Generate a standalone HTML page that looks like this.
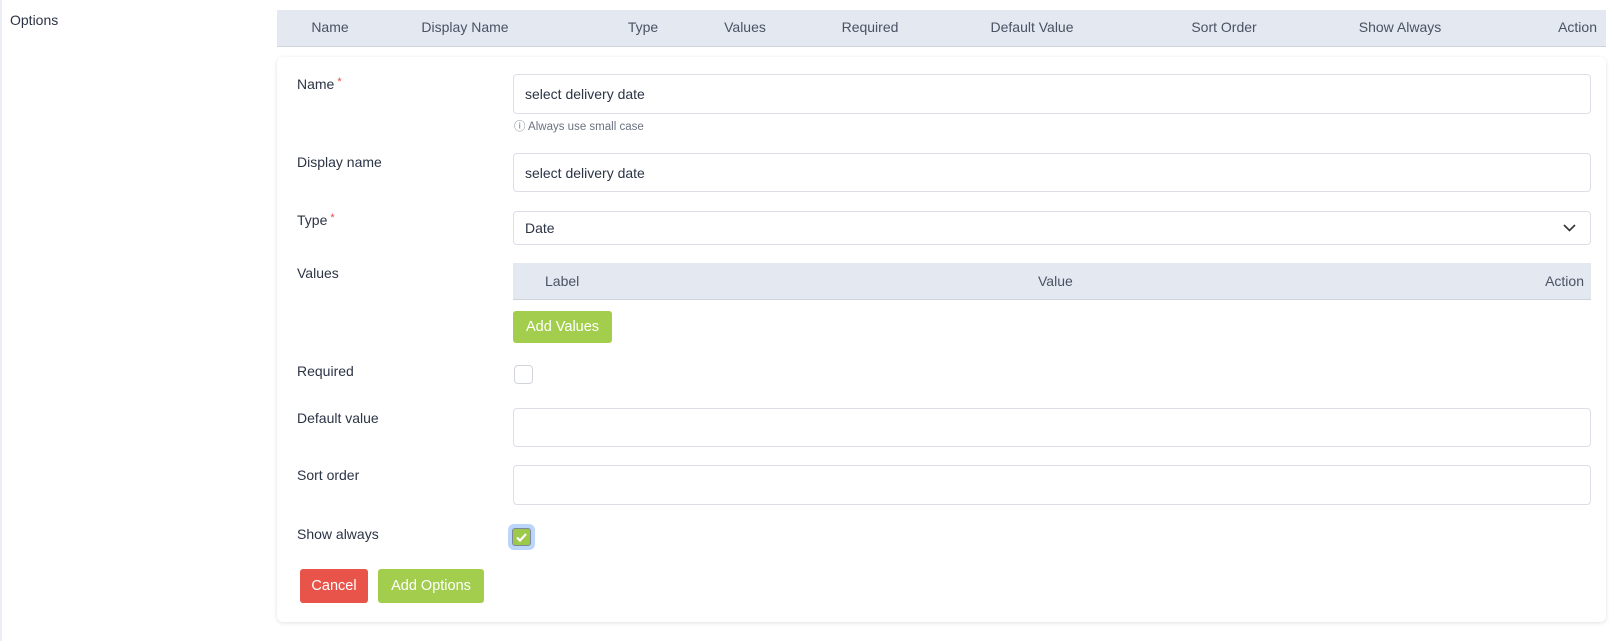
<!DOCTYPE html>
<html><head><meta charset="utf-8"><style>
*{box-sizing:border-box;margin:0;padding:0}
body{width:1614px;height:641px;background:#fff;font-family:"Liberation Sans",sans-serif;font-size:14px;color:#2b3445;position:relative;overflow:hidden}
.a{position:absolute}
.lb{position:absolute;left:297px}
.in{position:absolute;left:513px;width:1078px;border:1px solid #dcdfe5;border-radius:4px;background:#fff;padding-left:11px;display:flex;align-items:center}
.th{position:absolute;top:19px;color:#4a5263;transform:translateX(-50%)}
.req{color:#e5484d;font-size:11px;vertical-align:top;margin-left:3px}
.btn{position:absolute;color:#fff;border-radius:3px;display:flex;align-items:center;justify-content:center;font-size:14.5px}
</style></head><body>
<div class="a" style="left:0;top:0;width:2px;height:641px;background:#eceef6"></div>
<div class="a" style="left:10px;top:12px">Options</div>
<div class="a" style="left:277px;top:10px;width:1329px;height:37px;background:#e4e8f1;border-bottom:1px solid #cfd4de"></div>
<div class="th" style="left:330px">Name</div>
<div class="th" style="left:465px">Display Name</div>
<div class="th" style="left:643px">Type</div>
<div class="th" style="left:745px">Values</div>
<div class="th" style="left:870px">Required</div>
<div class="th" style="left:1032px">Default Value</div>
<div class="th" style="left:1224px">Sort Order</div>
<div class="th" style="left:1400px">Show Always</div>
<div class="a" style="right:17px;top:19px;color:#4a5263">Action</div>

<div class="a" style="left:277px;top:57px;width:1329px;height:565px;border-radius:6px;background:#fff;box-shadow:0 1px 4px rgba(0,0,0,.12)"></div>

<div class="lb" style="top:76px">Name<span class="req">*</span></div>
<div class="in" style="top:74px;height:40px">select delivery date</div>
<div class="a" style="left:514px;top:118px;font-size:11.5px;color:#6b7280">ⓘ Always use small case</div>

<div class="lb" style="top:154px">Display name</div>
<div class="in" style="top:153px;height:39px">select delivery date</div>

<div class="lb" style="top:212px">Type<span class="req">*</span></div>
<div class="in" style="top:211px;height:34px">Date
<svg class="a" style="right:14px;top:12px" width="13" height="8" viewBox="0 0 13 8"><path d="M1 1l5.5 5.5L12 1" fill="none" stroke="#333" stroke-width="1.6"/></svg></div>

<div class="lb" style="top:265px">Values</div>
<div class="a" style="left:513px;top:263px;width:1078px;height:37px;background:#e4e8f1;border-bottom:1px solid #cfd4de"></div>
<div class="a" style="left:545px;top:273px;color:#4a5263">Label</div>
<div class="a" style="left:1038px;top:273px;color:#4a5263">Value</div>
<div class="a" style="right:30px;top:273px;color:#4a5263">Action</div>
<div class="btn" style="left:513px;top:311px;width:99px;height:32px;background:#a2cd4d">Add Values</div>

<div class="lb" style="top:363px">Required</div>
<div class="a" style="left:514px;top:365px;width:19px;height:19px;border:1px solid #d0d4da;border-radius:4px"></div>

<div class="lb" style="top:410px">Default value</div>
<div class="in" style="top:408px;height:39px"></div>

<div class="lb" style="top:467px">Sort order</div>
<div class="in" style="top:465px;height:40px"></div>

<div class="lb" style="top:526px">Show always</div>
<div class="a" style="left:508px;top:524px;width:27px;height:26px;border-radius:6px;background:#bcd6fb"></div>
<div class="a" style="left:512px;top:528px;width:19px;height:18px;border-radius:3px;background:#9dc94b;border:1px solid #7e8a9a"></div>
<svg class="a" style="left:515px;top:531px" width="13" height="12" viewBox="0 0 13 12"><path d="M2 6.5l3 3 6-6.5" fill="none" stroke="#fff" stroke-width="2.2"/></svg>

<div class="btn" style="left:300px;top:569px;width:68px;height:34px;background:#e8544a">Cancel</div>
<div class="btn" style="left:378px;top:569px;width:106px;height:34px;background:#a2cd4d">Add Options</div>
</body></html>
